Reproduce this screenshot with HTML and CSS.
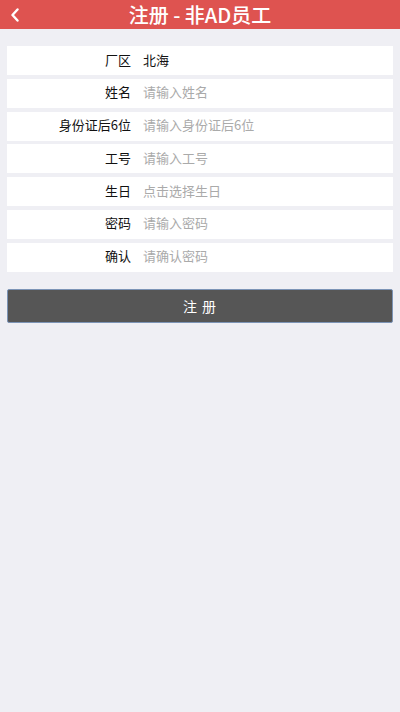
FILE: index.html
```html
<!DOCTYPE html>
<html lang="zh-CN">
<head>
    <meta charset="UTF-8">
    <meta name="viewport" content="width=device-width, initial-scale=1.0">
    <title>注册 - 非AD员工</title>
    <link rel="stylesheet" href="styles.css">
</head>
<body>
    <!-- Top bar with back arrow -->
    <header class="topbar">
        <a class="back" href="#">
            <svg width="10" height="14" viewBox="0 0 10 14"><path d="M7.5 1.5 L2.5 7 L7.5 12.5" fill="none" stroke="#fff" stroke-width="2.4" stroke-linecap="round" stroke-linejoin="round"/></svg>
        </a>
        <h1>注册 - 非AD员工</h1>
    </header>

    <main class="page">
        <!-- Registration fields -->
        <form class="reg-form">
            <div class="row">
                <label>厂区</label>
                <span class="value">北海</span>
            </div>
            <div class="row">
                <label for="name">姓名</label>
                <input type="text" id="name" placeholder="请输入姓名">
            </div>
            <div class="row">
                <label for="idcard">身份证后6位</label>
                <input type="text" id="idcard" placeholder="请输入身份证后6位">
            </div>
            <div class="row">
                <label for="jobno">工号</label>
                <input type="text" id="jobno" placeholder="请输入工号">
            </div>
            <div class="row">
                <label for="birthday">生日</label>
                <input type="text" id="birthday" placeholder="点击选择生日">
            </div>
            <div class="row">
                <label for="pwd">密码</label>
                <input type="password" id="pwd" placeholder="请输入密码">
            </div>
            <div class="row">
                <label for="pwd2">确认</label>
                <input type="password" id="pwd2" placeholder="请确认密码">
            </div>

            <button type="submit" class="submit">注 册</button>
        </form>
    </main>
</body>
</html>
```

FILE: styles.css
```css
/* Base page */
body {
    margin: 0;
    background-color: #efeff4;
    font-family: "Noto Sans CJK SC", "Noto Sans", sans-serif;
    min-height: 712px;
}
/* Header bar */
.topbar {
    height: 29px;
    background-color: #de5350;
    display: flex;
    align-items: center;
    justify-content: center;
    position: relative;
}
.topbar h1 {
    margin: 0;
    color: #fff;
    font-size: 20px;
    font-weight: 500;
    line-height: 29px;
}
.back {
    position: absolute;
    left: 10px;
    top: 8px;
    display: flex;
}
/* Form rows */
.page {
    padding: 17px 7px;
}
.reg-form {
    display: flex;
    flex-direction: column;
    gap: 3.8px;
}
.row {
    height: 29px;
    box-sizing: border-box;
    padding-bottom: 3px;
    background-color: #fff;
    display: flex;
    align-items: center;
}
.row label {
    width: 124px;
    text-align: right;
    font-size: 13px;
    color: #111;
    padding-right: 12px;
    flex-shrink: 0;
}
.row input,
.row .value {
    flex: 1;
    border: none;
    outline: none;
    padding: 0;
    font-family: inherit;
    font-size: 13px;
    color: #111;
    background: transparent;
}
.row input::placeholder {
    color: #aaa;
}
/* Submit button */
.submit {
    margin-top: 13px;
    height: 34px;
    background-color: #565656;
    border: 1px solid #7c94b6;
    border-radius: 2px;
    color: #fff;
    font-family: inherit;
    font-size: 14px;
    letter-spacing: 1px;
}
```
